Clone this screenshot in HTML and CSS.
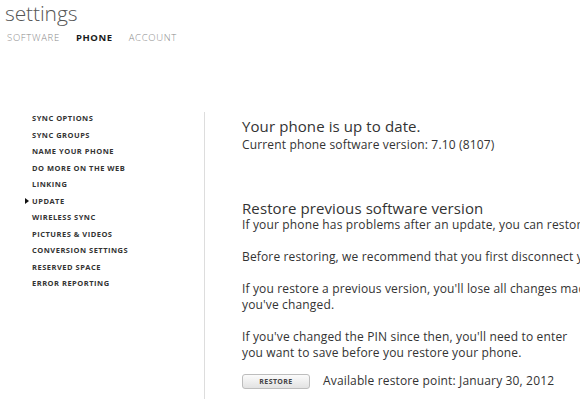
FILE: index.html
```html
<!DOCTYPE html>
<html>
<head>
<meta charset="utf-8">
<title>settings</title>
<link rel="stylesheet" href="styles.css">
</head>
<body>
<header class="top">
  <div class="title">settings</div>
  <nav class="tabs">
    <span class="tab">SOFTWARE</span>
    <span class="tab active">PHONE</span>
    <span class="tab">ACCOUNT</span>
  </nav>
</header>
<div class="layout">
  <ul class="side">
    <li>SYNC OPTIONS</li>
    <li>SYNC GROUPS</li>
    <li>NAME YOUR PHONE</li>
    <li>DO MORE ON THE WEB</li>
    <li>LINKING</li>
    <li class="current">UPDATE</li>
    <li>WIRELESS SYNC</li>
    <li>PICTURES &amp; VIDEOS</li>
    <li>CONVERSION SETTINGS</li>
    <li>RESERVED SPACE</li>
    <li>ERROR REPORTING</li>
  </ul>
  <main class="content">
    <h2 class="head">Your phone is up to date.</h2>
    <p class="sub">Current phone software version: 7.10 (8107)</p>
    <h2 class="head restore-head">Restore previous software version</h2>
    <p class="para first">If your phone has problems after an update, you can restore the previous version.</p>
    <p class="para">Before restoring, we recommend that you first disconnect your phone.</p>
    <p class="para">If you restore a previous version, you'll lose all changes made to settings<br>you've changed.</p>
    <p class="para">If you've changed the PIN since then, you'll need to enter<br>you want to save before you restore your phone.</p>
    <div class="action">
      <button class="btn" type="button">RESTORE</button>
      <span class="point">Available restore point: January 30, 2012</span>
    </div>
  </main>
</div>
</body>
</html>
```
FILE: styles.css
```css
html, body {
  margin: 0;
  padding: 0;
  background: #ffffff;
}
body {
  width: 580px;
  height: 409px;
  overflow: hidden;
  font-family: "Open Sans", "DejaVu Sans", sans-serif;
  color: #333333;
}
.top {
  padding-left: 5px;
}
.title {
  font-size: 21px;
  font-weight: 300;
  line-height: 26px;
  color: #555555;
  letter-spacing: -0.1px;
}
.tabs {
  display: flex;
  gap: 16px;
  padding-left: 2px;
  margin-top: 6px;
  font-size: 9.5px;
  line-height: 12px;
  letter-spacing: 0.7px;
}
.tab {
  color: #8a8a8a;
  font-weight: 300;
}
.tab.active {
  color: #1a1a1a;
  font-weight: 700;
  letter-spacing: 0.6px;
}
.layout {
  display: flex;
  margin-top: 68px;
}
.side {
  flex: 0 0 172px;
  list-style: none;
  margin: -2px 0 0 0;
  padding: 0 0 0 32px;
  font-size: 7.5px;
  font-weight: 700;
  line-height: 16.5px;
  letter-spacing: 0.5px;
  color: #333333;
}
.side li {
  position: relative;
  white-space: nowrap;
}
.side li.current::before {
  content: "";
  position: absolute;
  left: -7px;
  top: 5px;
  border-left: 4px solid #111111;
  border-top: 3.5px solid transparent;
  border-bottom: 3.5px solid transparent;
}
.content {
  flex: 1 1 auto;
  min-width: 0;
  border-left: 1px solid #dddddd;
  height: 287px;
  padding-left: 37px;
  white-space: nowrap;
  overflow: hidden;
  letter-spacing: 0.15px;
}
.head {
  margin: 6px 0 0 0;
  font-size: 15px;
  font-weight: 400;
  line-height: 17px;
  color: #333333;
  letter-spacing: 0.1px;
}
.sub {
  margin: 2px 0 0 0;
  font-size: 12px;
  line-height: 16px;
}
.restore-head {
  margin-top: 47px;
}
.para {
  margin: 16px 0 0 0;
  font-size: 12px;
  line-height: 16px;
}
.para.first {
  margin-top: 0;
}
.action {
  display: flex;
  align-items: center;
  gap: 13px;
  margin-top: 12px;
  height: 16px;
}
.btn {
  width: 68px;
  height: 15px;
  padding: 0;
  border: 1px solid #bdbdbd;
  border-radius: 3px;
  background: linear-gradient(#fbfbfb, #e2e2e2);
  font-family: "Open Sans", "DejaVu Sans", sans-serif;
  font-size: 7px;
  font-weight: 700;
  letter-spacing: 0.4px;
  color: #444444;
}
.point {
  font-size: 12px;
  line-height: 16px;
}
```
